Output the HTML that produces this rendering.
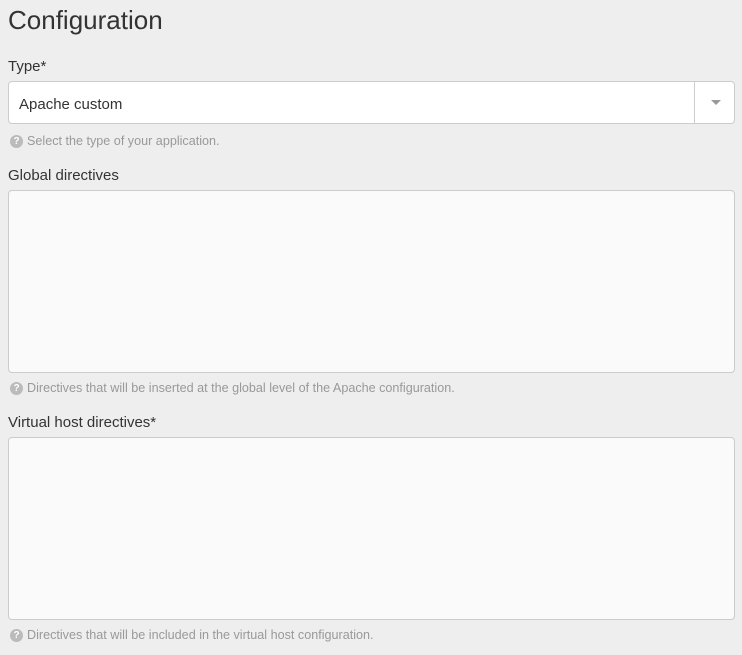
<!DOCTYPE html>
<html><head><style>
body{margin:0;background:#eee;font-family:"Liberation Sans",sans-serif;color:#333;width:742px;height:655px;overflow:hidden;position:relative}
.a{position:absolute}
h1{position:absolute;left:8px;top:5px;margin:0;font-weight:normal;font-size:26px;color:#333}
.lbl{font-size:15px;color:#333}
.help{font-size:12.6px;color:#999;display:flex;align-items:center}
.q{width:13px;height:13px;border-radius:50%;background:#bbb;color:#fff;font-size:10px;font-weight:bold;text-align:center;line-height:13px;margin-right:4px}
.box{border:1px solid #ccc;border-radius:4px;box-sizing:border-box}
</style></head><body>
<h1>Configuration</h1>
<div class="a lbl" style="left:8px;top:58px">Type*</div>
<div class="a box" style="left:8px;top:81px;width:727px;height:43px;background:#fff">
 <div class="a" style="left:10px;top:14px;font-size:15px">Apache custom</div>
 <div class="a" style="left:685px;top:0;width:1px;height:41px;background:#ccc"></div>
 <div class="a" style="left:702px;top:18px;width:0;height:0;border-left:5px solid transparent;border-right:5px solid transparent;border-top:5px solid #999"></div>
</div>
<div class="a help" style="left:10px;top:134px"><span class="q">?</span>Select the type of your application.</div>
<div class="a lbl" style="left:8px;top:167px">Global directives</div>
<div class="a box" style="left:8px;top:190px;width:727px;height:183px;background:#fafafa"></div>
<div class="a help" style="left:10px;top:381px"><span class="q">?</span>Directives that will be inserted at the global level of the Apache configuration.</div>
<div class="a lbl" style="left:8px;top:414px">Virtual host directives*</div>
<div class="a box" style="left:8px;top:437px;width:727px;height:183px;background:#fafafa"></div>
<div class="a help" style="left:10px;top:628px"><span class="q">?</span>Directives that will be included in the virtual host configuration.</div>
</body></html>
